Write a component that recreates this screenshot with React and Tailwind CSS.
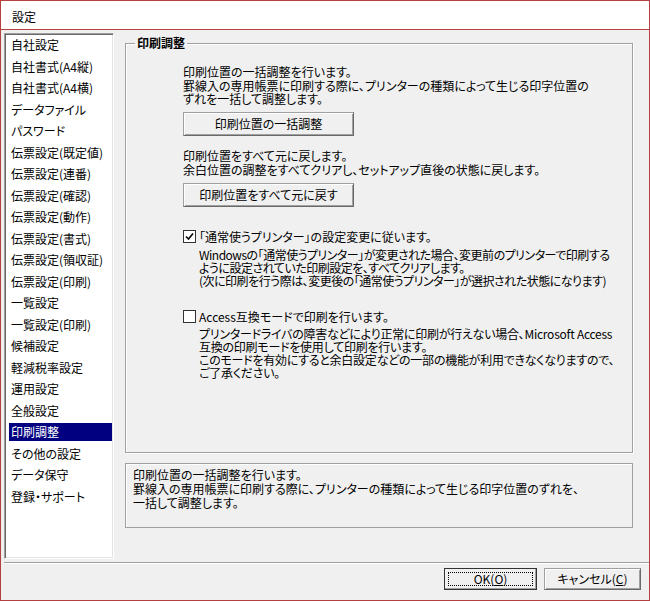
import React from 'react';

const menuItems = [
  '自社設定',
  '自社書式(A4縦)',
  '自社書式(A4横)',
  'データファイル',
  'パスワード',
  '伝票設定(既定値)',
  '伝票設定(連番)',
  '伝票設定(確認)',
  '伝票設定(動作)',
  '伝票設定(書式)',
  '伝票設定(領収証)',
  '伝票設定(印刷)',
  '一覧設定',
  '一覧設定(印刷)',
  '候補設定',
  '軽減税率設定',
  '運用設定',
  '全般設定',
  '印刷調整',
  'その他の設定',
  'データ保守',
  '登録・サポート',
];

const selected = '印刷調整';

const btnClass =
  'flex items-center justify-center bg-[#f0f0f0] border border-[#a0a0a0] border-r-[#696969] border-b-[#696969] shadow-[inset_1px_1px_0_#ffffff,inset_-1px_-1px_0_#a0a0a0] whitespace-nowrap';

const Checkbox = ({ checked }) => (
  <div className="w-[13px] h-[13px] shrink-0 bg-white border border-[#333333] flex items-center justify-center">
    {checked && (
      <svg width="9" height="9" viewBox="0 0 9 9">
        <path d="M1 4.5 L3.5 7 L8 1.5" fill="none" stroke="#000" strokeWidth="1.6" />
      </svg>
    )}
  </div>
);

export default function App() {
  return (
    <div className="w-[650px] h-[601px] border border-[#b4413f] bg-[#f0f0f0] flex flex-col text-[12px] leading-[13.5px] text-black font-['Noto_Sans_CJK_JP',sans-serif] [font-feature-settings:'palt']">
      {/* Title bar */}
      <div className="h-[29px] shrink-0 bg-white border-b border-[#b4413f] flex items-center pl-[11px] pt-[4px]">
        設定
      </div>

      {/* Body */}
      <div className="flex pt-[3px] pl-[3px] pb-[3px]">
        {/* Menu list */}
        <div className="w-[110px] h-[526px] shrink-0 bg-white border border-[#a0a0a0] border-r-white border-b-white shadow-[inset_1px_1px_0_#696969,inset_-1px_-1px_0_#e3e3e3] pt-[2px] pr-[1px] flex flex-col gap-[3.5px]">
          {menuItems.map((item) => (
            <div
              key={item}
              className={`h-[18px] shrink-0 ml-[4px] pl-[2px] flex items-center whitespace-nowrap ${
                item === selected ? 'bg-[#000080] text-white' : ''
              }`}
            >
              {item}
            </div>
          ))}
        </div>

        {/* Right column */}
        <div className="ml-[11px] w-[508px] flex flex-col">
          <fieldset className="mt-[3px] h-[417px] min-w-0 border border-[#a0a0a0] shadow-[1px_1px_0_#ffffff,inset_1px_1px_0_#ffffff]">
            <legend className="ml-[9px] px-[2px] font-bold leading-[14px]">印刷調整</legend>
            <div className="pt-[15px] pl-[57px] whitespace-nowrap">
              <p>
                印刷位置の一括調整を行います。
                <br />
                罫線入の専用帳票に印刷する際に、プリンターの種類によって生じる印字位置の
                <br />
                ずれを一括して調整します。
              </p>
              <button className={`${btnClass} mt-[6.5px] w-[171px] h-[24px]`}>印刷位置の一括調整</button>

              <p className="mt-[13px]">
                印刷位置をすべて元に戻します。
                <br />
                余白位置の調整をすべてクリアし、セットアップ直後の状態に戻します。
              </p>
              <button className={`${btnClass} mt-[7px] w-[171px] h-[24px]`}>印刷位置をすべて元に戻す</button>

              <div className="mt-[23px] flex items-center gap-[3px]">
                <Checkbox checked />
                <span>「通常使うプリンター」の設定変更に従います。</span>
              </div>
              <p className="mt-[4px] pl-[16px] leading-[13px] tracking-[-0.5px]">
                Windowsの「通常使うプリンター」が変更された場合、変更前のプリンターで印刷する
                <br />
                ように設定されていた印刷設定を、すべてクリアします。
                <br />
                (次に印刷を行う際は、変更後の「通常使うプリンター」が選択された状態になります)
              </p>

              <div className="mt-[23px] flex items-center gap-[3px]">
                <Checkbox />
                <span>Access互換モードで印刷を行います。</span>
              </div>
              <p className="mt-[4px] pl-[16px] leading-[13px] tracking-[-0.25px]">
                プリンタードライバの障害などにより正常に印刷が行えない場合、Microsoft Access
                <br />
                互換の印刷モードを使用して印刷を行います。
                <br />
                このモードを有効にすると余白設定などの一部の機能が利用できなくなりますので、
                <br />
                ご了承ください。
              </p>
            </div>
          </fieldset>

          {/* Help box */}
          <div className="mt-[10px] h-[65px] border border-[#a0a0a0] shadow-[inset_1px_1px_0_#ffffff] pt-[4px] pl-[7px] leading-[14px] whitespace-nowrap">
            印刷位置の一括調整を行います。
            <br />
            罫線入の専用帳票に印刷する際に、プリンターの種類によって生じる印字位置のずれを、
            <br />
            一括して調整します。
          </div>
        </div>
      </div>

      {/* Separator */}
      <div className="ml-[3px] border-t border-[#a0a0a0] border-b border-b-white" />

      {/* Footer buttons */}
      <div className="flex justify-end gap-[7px] pt-[4px] pr-[8px]">
        <button className="w-[93px] h-[22px] p-[3px] bg-[#f0f0f0] border border-[#333333] shadow-[inset_-1px_-1px_0_#a0a0a0]">
          <span className="w-full h-full border border-dotted border-black flex items-center justify-center">
            OK(<span className="underline">O</span>)
          </span>
        </button>
        <button className={`${btnClass} w-[97px] h-[22px]`}>
          キャンセル(<span className="underline">C</span>)
        </button>
      </div>
    </div>
  );
}
